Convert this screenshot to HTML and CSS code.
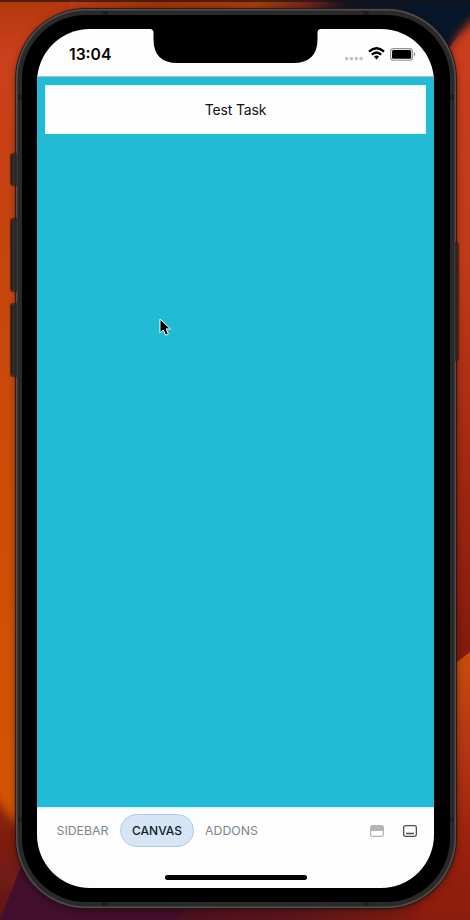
FILE: index.html
```html
<!DOCTYPE html>
<html lang="en">
<head>
<meta charset="utf-8">
<title>Test Task</title>
<link rel="stylesheet" href="styles.css">
</head>
<body>
<svg class="wallpaper" viewBox="0 0 470 920" aria-hidden="true">
  <defs>
    <linearGradient id="left" x1="0" y1="0" x2="0" y2="1">
      <stop offset="0" stop-color="#b3380e"/><stop offset=".06" stop-color="#cb401c"/><stop offset=".22" stop-color="#c5430f"/><stop offset=".5" stop-color="#cb4d07"/><stop offset="1" stop-color="#d45800"/>
    </linearGradient>
    <linearGradient id="right" x1="0" y1="0" x2="0" y2="1">
      <stop offset="0" stop-color="#081527"/><stop offset=".03" stop-color="#091629"/><stop offset=".045" stop-color="#72201f"/><stop offset=".065" stop-color="#cb3c1b"/><stop offset=".28" stop-color="#c03b19"/><stop offset=".48" stop-color="#a62a12"/><stop offset=".72" stop-color="#821a0c"/>
    </linearGradient>
    <linearGradient id="petal" x1="0" y1="0" x2="0" y2="1">
      <stop offset="0" stop-color="#c84d0b"/><stop offset=".35" stop-color="#b53612"/><stop offset=".75" stop-color="#98200d"/><stop offset="1" stop-color="#8b1d0d"/>
    </linearGradient>
    <linearGradient id="top" x1="0" y1="0" x2="1" y2="0">
      <stop offset="0" stop-color="#ba3b13"/><stop offset=".25" stop-color="#9f3209"/><stop offset=".53" stop-color="#a83b09"/><stop offset=".67" stop-color="#762619"/><stop offset=".79" stop-color="#121524"/><stop offset="1" stop-color="#071729"/>
    </linearGradient>
    <linearGradient id="low" x1="0" y1="0" x2="0" y2="1"><stop offset="0" stop-color="#922408"/><stop offset="1" stop-color="#5c151b"/></linearGradient>
    <linearGradient id="floor" x1="0" y1="0" x2="1" y2="0"><stop offset="0" stop-color="#4d1122"/><stop offset=".5" stop-color="#5d161b"/><stop offset="1" stop-color="#861c0e"/></linearGradient>
    <filter id="soft"><feGaussianBlur stdDeviation="5"/></filter>
  </defs>
  <rect width="235" height="920" fill="url(#left)"/>
  <rect x="235" width="235" height="920" fill="url(#right)"/>
  <rect x="70" width="350" height="40" fill="url(#top)"/>
  <path d="M410 0H470V18L448 50L405 35Z" fill="#081629"/>
  <path d="M480 15Q448 37 446 75L480 90Z" fill="#cb3d1c" filter="url(#soft)"/>
  <path d="M440 675L470 652V920H235Z" fill="url(#petal)"/>
  <path d="M-10 788Q8 820 32 836V930H-10Z" fill="url(#low)" filter="url(#soft)"/>
  <path d="M0 920L22 864L90 890L200 908L176 920Z" fill="#430f2c"/>
  <path d="M176 920L195 900H420V920Z" fill="url(#floor)"/>
  <rect width="470" height="2" fill="#171314" opacity=".65"/>
</svg>
<main class="phone">
  <i class="key mute"></i><i class="key volume-up"></i><i class="key volume-down"></i><i class="key power"></i>
  <i class="seam band-tl"></i><i class="seam band-tr"></i><i class="seam band-bl"></i><i class="seam band-br"></i>
  <i class="seam seam-tl"></i><i class="seam seam-tr"></i><i class="seam seam-bl"></i><i class="seam seam-br"></i>
  <div class="bezel">
    <div class="screen">
      <header class="status">
        <time>13:04</time>
        <div class="status-icons">
          <svg class="cell" viewBox="0 0 18 4"><g fill="#c2c2c4"><rect width="3.2" height="3.2" rx="1"/><rect x="4.8" width="3.2" height="3.2" rx="1"/><rect x="9.6" width="3.2" height="3.2" rx="1"/><rect x="14.4" width="3.2" height="3.2" rx="1"/></g></svg>
          <svg class="wifi" viewBox="0 0 17 13"><g fill="none" stroke="#000" stroke-width="2.3"><path d="M1 4.6Q8.5-2.2 16 4.6"/><path d="M3.8 7.6Q8.5 3.3 13.2 7.6"/></g><path d="M5.9 9.6Q8.5 7.5 11.1 9.6L8.5 12.4Z"/></svg>
          <svg class="battery" viewBox="0 0 26 13"><rect x=".6" y=".6" width="22" height="11.6" rx="3" fill="none" stroke="#929292" stroke-width="1.1"/><rect x="2" y="2" width="19.2" height="8.8" rx="1.5"/><path d="M24 4.2Q26.1 6.2 24 8.3Z" fill="#777"/></svg>
        </div>
      </header>
      <svg class="notch" viewBox="0 0 174 35"><path d="M0 0H174V1H173Q169.500 1 169.500 5V11Q169.500 35 145 35H29.500Q5.500 35 5.500 11V5Q5.500 1 2 1H0Z"/></svg>
      <section class="canvas"><div class="card">Test Task</div></section>
      <nav class="tabs">
        <button class="tab sidebar">SIDEBAR</button>
        <button class="tab active">CANVAS</button>
        <button class="tab addons">ADDONS</button>
        <div class="tools">
          <svg viewBox="0 0 14 12"><rect x=".6" y=".6" width="12.8" height="10.8" rx="1.8" fill="none" stroke="#b5b5b5" stroke-width="1.2"/><path d="M1 1H13V6H1Z" fill="#b5b5b5"/></svg>
          <svg viewBox="0 0 14 12"><rect x=".65" y=".65" width="12.7" height="10.7" rx="1.8" fill="none" stroke="#505050" stroke-width="1.3"/><path d="M3 8.5H11" stroke="#505050" stroke-width="1.4"/></svg>
        </div>
      </nav>
      <div class="home"></div>
    </div>
  </div>
</main>
<svg class="pointer" viewBox="0 0 13 19"><path d="M1 1V15L4.3 12L6.7 17.2L9.4 16L7.1 10.9H11.4Z" stroke="#fff" stroke-width="1"/></svg>
</body>
</html>
```
FILE: styles.css
```css
* { box-sizing: border-box; }
body { margin: 0; width: 470px; height: 920px; overflow: hidden; position: relative; background: #b9380f; font-family: Inter, sans-serif; }
.wallpaper { position: absolute; inset: 0; width: 470px; height: 920px; }
.phone { position: relative; width: 440px; height: 899px; margin: 9px 0 0 16px; padding: 6px; border-radius: 70px; background: #29292a; box-shadow: inset 0 0 0 1.5px #50504f, 0 0 1px 1px #2a1714, 0 2px 8px rgba(0,0,0,.4); }
.bezel { width: 428px; height: 887px; padding: 14px 16px 14px 15px; border-radius: 64px; background: #000; }
.screen { position: relative; display: flex; flex-direction: column; width: 397px; height: 859px; overflow: hidden; border-radius: 53px; background: #fdfdfd; }
.status { display: flex; flex: 0 0 48px; justify-content: space-between; align-items: flex-start; padding: 18px 18px 0 32px; border-bottom: 1px solid #a9babd; }
.status time { font-size: 15.7px; line-height: 16px; font-weight: 600; color: #050505; }
.status-icons { display: flex; align-items: flex-start; }
.cell { width: 18px; height: 4px; margin: 10px 5px 0 0; }
.wifi { width: 17px; height: 13px; margin: 0 5px 0 0; }
.battery { width: 26px; height: 13px; margin-top: 1px; }
.notch { position: absolute; left: 111px; top: -1px; width: 174px; height: 35px; }
.canvas { flex: 0 0 730px; padding: 8px; background: #21bbd5; }
.card { display: grid; place-items: center; width: 381px; height: 49px; background: #fdfdfd; border: 1px solid #e9ffff; font: 14px Inter, sans-serif; letter-spacing: -.18px; color: #111; }
.tabs { display: flex; align-items: center; height: 47px; padding: 0 17px 1px 8px; border-top: 1px solid #c8f6ff; }
.tab { height: 33px; border: 1px solid transparent; border-radius: 17px; background: none; font: 12.3px Inter, sans-serif; color: #7c8790; }
.tab.sidebar { width: 75px; padding: 0; }
.tab.active { width: 74px; padding: 0; background: #d6e5f6; border-color: #acc8e9; color: #101c26; font-weight: 500; font-size: 12px; }
.tab.addons { width: 75px; padding: 0; }
.tools { display: flex; gap: 19px; margin-left: auto; }
.tools svg { width: 14px; height: 12px; }
.home { width: 142px; height: 5px; margin: 21px 0 0 128px; border-radius: 3px; background: #000; }
.key { position: absolute; left: -5px; width: 5px; background: linear-gradient(90deg, #171514, #343132 40%, #242324); border-radius: 2px 0 0 2px; box-shadow: 0 0 1px 1px rgba(40,10,5,.6); }
.mute { top: 145px; height: 31px; }
.volume-up { top: 210px; height: 72px; }
.volume-down { top: 295px; height: 72px; }
.power { left: 440px; top: 234px; width: 2px; height: 117px; border-radius: 0 2px 2px 0; }
.seam { position: absolute; width: 4px; height: 5px; background: #151515; opacity: .55; }
.band-tl, .band-tr, .band-bl, .band-br { width: 6px; height: 4px; }
.band-tl { left: 86px; top: 2px; }
.band-tr { left: 347px; top: 2px; }
.band-bl { left: 86px; bottom: 2px; }
.band-br { left: 347px; bottom: 2px; }
.seam-tl { left: 2px; top: 86px; }
.seam-tr { right: 2px; top: 86px; }
.seam-bl { left: 2px; bottom: 86px; }
.seam-br { right: 2px; bottom: 86px; }
.pointer { position: absolute; left: 159px; top: 318px; width: 13px; height: 19px; }
```
